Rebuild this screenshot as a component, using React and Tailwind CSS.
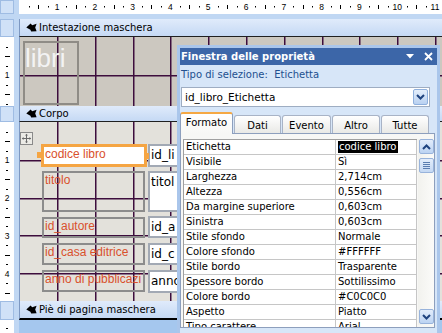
import React from "react";

const CM = 37.8;

function TopRuler() {
  const items = [];
  for (let q = 1; q < 48; q++) {
    const x = 0.2 + (q * CM) / 4;
    if (q % 4 === 0)
      items.push(
        <text key={q} x={x} y={10} textAnchor="middle" fontSize="8.5" fontFamily="Liberation Sans, sans-serif" fill="#000">
          {q / 4}
        </text>
      );
    else if (q % 2 === 0) items.push(<rect key={q} x={Math.round(x)} y={5} width={1} height={4} fill="#000" />);
    else items.push(<rect key={q} x={Math.round(x)} y={6} width={1} height={1.5} fill="#000" />);
  }
  return (
    <svg width="423" height="14" className="block">
      {items}
    </svg>
  );
}

function LeftRuler({ h }) {
  const items = [];
  for (let q = 1; (q * CM) / 4 < h - 2; q++) {
    const y = (q * CM) / 4 + 0.5;
    if (q % 4 === 0)
      items.push(
        <text key={q} x={7} y={y + 3} textAnchor="middle" fontSize="8.5" fontFamily="Liberation Sans, sans-serif" fill="#000">
          {q / 4}
        </text>
      );
    else if (q % 2 === 0) items.push(<rect key={q} x={5} y={Math.round(y)} width={5} height={1} fill="#000" />);
    else items.push(<rect key={q} x={6} y={Math.round(y)} width={2} height={1} fill="#000" />);
  }
  return (
    <svg width="14" height={h} className="block">
      {items}
    </svg>
  );
}

function GridLines({ h, oy }) {
  const items = [];
  for (let n = 1; n <= 11; n++) {
    items.push(<rect key={"v" + n} x={Math.round(CM * n - 0.8)} y={0} width={1.5} height={h} fill="#3d0d3d" />);
  }
  for (let n = 1; CM * n + oy < h; n++) {
    items.push(<rect key={"h" + n} x={0} y={Math.round(CM * n + oy)} width={430} height={1.5} fill="#3d0d3d" />);
  }
  return (
    <svg width="430" height={h} className="absolute left-0 top-0">
      {items}
    </svg>
  );
}

function BandIcon() {
  return (
    <svg width="11" height="9" viewBox="0 0 11 9" className="block">
      <path d="M0.3 4.6 L4.6 0.6 L6.2 2.2 L10.6 0.8 L9.2 4.4 L10.6 8.2 L5.2 8.4 L4.4 6.8 Z" fill="#000" />
    </svg>
  );
}

function Band({ label, rowClass, barClass }) {
  return (
    <div className={rowClass}>
      <div className="w-[14px] bg-[#d0e1f7] border border-[#9fbce3]" />
      <div className="w-[5px]" />
      <div className={barClass}>
        <BandIcon />
        <span className="ml-[2px] whitespace-nowrap">{label}</span>
      </div>
    </div>
  );
}

function MoveIcon() {
  return (
    <svg width="13" height="13" viewBox="0 0 13 13" className="block">
      <rect x="0.5" y="0.5" width="12" height="12" fill="#ecebe6" stroke="#8a8a8a" />
      <path d="M6.5 2.5 V10.5 M2.5 6.5 H10.5" stroke="#6a6a6a" strokeWidth="1" />
      <path d="M6.5 1.8 L5 3.6 H8 Z M6.5 11.2 L5 9.4 H8 Z M1.8 6.5 L3.6 5 V8 Z M11.2 6.5 L9.4 5 V8 Z" fill="#6a6a6a" />
    </svg>
  );
}

function Chevron({ up, color = "#1f437f" }) {
  return (
    <svg width="9" height="6" viewBox="0 0 9 6" className="block">
      <path d={up ? "M1 5 L4.5 1.5 L8 5" : "M1 1 L4.5 4.5 L8 1"} fill="none" stroke={color} strokeWidth="2" />
    </svg>
  );
}

const rows = [
  ["Etichetta", "codice libro"],
  ["Visibile", "Sì"],
  ["Larghezza", "2,714cm"],
  ["Altezza", "0,556cm"],
  ["Da margine superiore", "0,603cm"],
  ["Sinistra", "0,603cm"],
  ["Stile sfondo", "Normale"],
  ["Colore sfondo", "#FFFFFF"],
  ["Stile bordo", "Trasparente"],
  ["Spessore bordo", "Sottilissimo"],
  ["Colore bordo", "#C0C0C0"],
  ["Aspetto", "Piatto"],
  ["Tipo carattere", "Arial"],
];

const labelCls =
  "absolute left-[22px] w-[103px] border-2 border-[#8c8c8c] pl-[1px] font-['Liberation_Sans',sans-serif] text-[12px] leading-[14px] text-[#d9502c] whitespace-nowrap overflow-hidden";
const boxCls =
  "absolute left-[128px] w-[29px] bg-white border-2 border-r-0 border-[#a2a9b4] pl-[1px] pt-[2px] text-[12px] leading-[14px] text-black whitespace-nowrap overflow-hidden";

function PropWindow() {
  return (
    <div className="absolute left-[177px] top-[45px] w-[263px] h-[288px] bg-[#d7e6f8] border-x-[3px] border-t-[3px] border-[#aac6eb] flex flex-col">
      <div className="h-[17px] shrink-0 bg-[#3c66a8] flex items-center justify-between pl-[1px] pr-[4px]">
        <span className="font-bold text-white text-[10px] whitespace-nowrap">Finestra delle proprietà</span>
        <div className="flex items-center gap-[10px]">
          <svg width="8" height="5" viewBox="0 0 8 5" className="block">
            <path d="M0 0 H8 L4 4.5 Z" fill="#fff" />
          </svg>
          <svg width="9" height="9" viewBox="0 0 9 9" className="block">
            <path d="M1 1 L8 8 M8 1 L1 8" stroke="#fff" strokeWidth="1.8" />
          </svg>
        </div>
      </div>
      <div className="mt-[4px] pl-[1px] h-[12px] shrink-0 leading-[12px] text-[#22508f] whitespace-nowrap">
        Tipo di selezione:&nbsp;&nbsp;Etichetta
      </div>
      <div className="mt-[6px] ml-[1px] w-[249px] h-[20px] shrink-0 bg-white border border-[#9eadc2] flex items-center justify-between pl-[3px] pr-[1px]">
        <span className="text-[10.5px]">id_libro_Etichetta</span>
        <div className="w-[15px] h-[16px] rounded-[2px] border border-[#8fb0dd] bg-gradient-to-b from-[#e4eefb] to-[#b9d1f1] flex items-center justify-center">
          <Chevron />
        </div>
      </div>
      <div className="mt-[5px] h-[21px] shrink-0 flex items-end gap-[1px]">
        <div className="relative z-10 w-[53px] h-[22px] -mb-px bg-gradient-to-b from-white to-[#f7f7f5] border-x border-t-2 border-x-[#8d9fbd] border-t-[#f5a843] rounded-t-[3px] flex justify-center pt-[4px]">
          Formato
        </div>
        {[
          ["Dati", "w-[47px]"],
          ["Evento", "w-[49px]"],
          ["Altro", "w-[48px]"],
          ["Tutte", "w-[48px]"],
        ].map(([t, w]) => (
          <div
            key={t}
            className={
              w +
              " h-[18px] bg-gradient-to-b from-white to-[#e9e9e6] border-x border-t border-[#a8b3c6] rounded-t-[3px] flex justify-center pt-[5px]"
            }
          >
            {t}
          </div>
        ))}
      </div>
      <div className="w-[255px] h-[195px] shrink-0 bg-[#f7f7f5] border border-[#8d9fbd] flex items-start pt-[5px] overflow-hidden">
        <div className="ml-[2px] w-[234px] h-[194px] overflow-hidden border-l border-t border-[#a0a0a0] bg-white">
          {rows.map(([k, v], i) => (
            <div key={k} className="flex h-[15px] border-b border-[#c6c6c6]">
              <div className="w-[152px] border-r border-[#c6c6c6] pl-[2px] leading-[14px] whitespace-nowrap">{k}</div>
              <div className="flex-1 border-r border-[#c6c6c6] pl-[2px] leading-[14px] whitespace-nowrap overflow-hidden">
                {i === 0 ? <span className="bg-black text-white px-[1px] inline-block leading-[12px] mt-[1px]">{v}</span> : v}
              </div>
            </div>
          ))}
        </div>
        <div className="ml-[1px] w-[16px] h-[186px] bg-gradient-to-r from-[#f2f2ee] to-[#fbfbf9] flex flex-col items-center">
          <div className="w-[15px] h-[15px] rounded-[2px] border border-[#98b3db] bg-gradient-to-b from-[#e3edfb] to-[#bcd3f2] flex items-center justify-center">
            <Chevron up />
          </div>
          <div className="mt-[4px] w-[15px] h-[15px] rounded-[2px] border border-[#98b3db] bg-gradient-to-b from-[#e3edfb] to-[#c4d8f3] flex flex-col items-center justify-center gap-[1px]">
            <div className="w-[7px] h-px bg-[#5a7db0]" />
            <div className="w-[7px] h-px bg-[#5a7db0]" />
            <div className="w-[7px] h-px bg-[#5a7db0]" />
            <div className="w-[7px] h-px bg-[#5a7db0]" />
          </div>
          <div className="mt-auto mb-[1px] w-[15px] h-[15px] rounded-[2px] border border-[#98b3db] bg-gradient-to-b from-[#e3edfb] to-[#bcd3f2] flex items-center justify-center">
            <Chevron />
          </div>
        </div>
      </div>
    </div>
  );
}

export default function App() {
  const barBase =
    "flex-1 flex items-center pl-[6px] bg-gradient-to-b from-[#e0ebfb] to-[#c5d9f4] border-l border-[#7d98c2]";
  return (
    <div className="relative w-[442px] h-[333px] overflow-hidden bg-[#c0d7f3] font-['DejaVu_Sans',sans-serif] text-[10px] leading-none text-black">
      <div className="flex h-[19px]">
        <div className="w-[14px] h-[14px] bg-[#d0e1f7] border border-[#9fbce3]" />
        <div className="ml-[5px] flex-1 h-[14px] bg-white overflow-hidden">
          <TopRuler />
        </div>
      </div>

      <Band label="Intestazione maschera" rowClass="flex h-[18px]" barClass={barBase + " border-b border-b-[#202020]"} />

      <div className="flex h-[69px]">
        <div className="w-[14px] bg-white overflow-hidden">
          <LeftRuler h={69} />
        </div>
        <div className="w-[5px]" />
        <div className="relative flex-1 bg-[#ccc8c0] border-l border-[#7d98c2] overflow-hidden">
          <GridLines h={69} oy={0.5} />
          <div className="absolute left-[3px] top-[4px] w-[56px] h-[64px] border-2 border-[#8f8c86] pt-[2px] font-['Liberation_Sans',sans-serif] text-[26px] leading-[26px] text-[#f3f3f3]">
            libri
          </div>
        </div>
      </div>

      <Band label="Corpo" rowClass="flex h-[16px]" barClass={barBase + " border-b border-b-[#202020]"} />

      <div className="flex h-[179px]">
        <div className="w-[14px] bg-white overflow-hidden">
          <LeftRuler h={179} />
        </div>
        <div className="w-[5px]" />
        <div className="relative flex-1 bg-[#e3e1db] border-l border-[#7d98c2] overflow-hidden">
          <GridLines h={179} oy={0} />
          <div className="absolute left-0 top-[10px]">
            <MoveIcon />
          </div>

          <div className="absolute left-[21px] top-[22px] w-[106px] h-[23px] bg-white border-[3px] border-[#f5a543] pl-[1px] font-['Liberation_Sans',sans-serif] text-[12px] leading-[15px] text-[#d9502c] whitespace-nowrap overflow-hidden">
            codice libro
          </div>
          <div className="absolute left-[17px] top-[30px] w-[6px] h-[6px] bg-[#f5a543]" />
          <div className="absolute left-[124px] top-[31px] w-[5px] h-[6px] bg-[#f5a543] z-10" />

          <div className={labelCls + " top-[49px] h-[41px]"}>titolo</div>
          <div className={labelCls + " top-[95px] h-[21px]"}>id_autore</div>
          <div className={labelCls + " top-[121px] h-[22px]"}>id_casa editrice</div>
          <div className={labelCls + " top-[148px] h-[22px]"}>anno di pubblicazi</div>

          <div className={boxCls + " top-[22px] h-[23px]"}>id_li</div>
          <div className={boxCls + " top-[49px] h-[41px]"}>titol</div>
          <div className={boxCls + " top-[94px] h-[22px]"}>id_a</div>
          <div className={boxCls + " top-[121px] h-[22px]"}>id_c</div>
          <div className={boxCls + " top-[148px] h-[23px]"}>anno</div>
        </div>
      </div>

      <Band
        label="Piè di pagina maschera"
        rowClass="flex h-[19px]"
        barClass={barBase + " border-b-2 border-b-black"}
      />

      <div className="flex h-[13px]">
        <div className="w-[14px] bg-white">
          <svg width="14" height="13" className="block">
            <rect x="6" y="8" width="2" height="1" fill="#000" />
          </svg>
        </div>
        <div className="w-[5px]" />
        <div className="flex-1 bg-[#a5c7ee]" />
      </div>

      <PropWindow />
    </div>
  );
}
